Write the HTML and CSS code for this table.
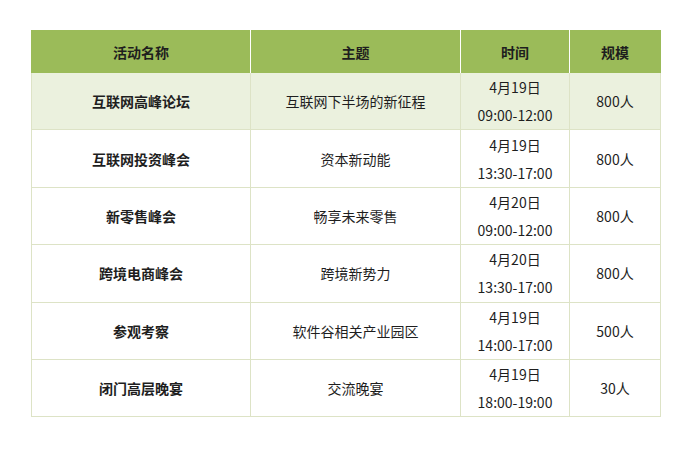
FILE: index.html
```html
<!DOCTYPE html>
<html lang="zh">
<head>
<meta charset="utf-8">
<link rel="stylesheet" href="styles.css">
</head>
<body>
<div class="page">
<table class="schedule">
  <colgroup>
    <col class="c1"><col class="c2"><col class="c3"><col class="c4">
  </colgroup>
  <thead>
    <tr><th>活动名称</th><th>主题</th><th>时间</th><th>规模</th></tr>
  </thead>
  <tbody>
    <tr class="hl"><td class="name">互联网高峰论坛</td><td>互联网下半场的新征程</td><td>4月19日<br>09:00-12:00</td><td>800人</td></tr>
    <tr><td class="name">互联网投资峰会</td><td>资本新动能</td><td>4月19日<br>13:30-17:00</td><td>800人</td></tr>
    <tr><td class="name">新零售峰会</td><td>畅享未来零售</td><td>4月20日<br>09:00-12:00</td><td>800人</td></tr>
    <tr><td class="name">跨境电商峰会</td><td>跨境新势力</td><td>4月20日<br>13:30-17:00</td><td>800人</td></tr>
    <tr><td class="name">参观考察</td><td>软件谷相关产业园区</td><td>4月19日<br>14:00-17:00</td><td>500人</td></tr>
    <tr><td class="name">闭门高层晚宴</td><td>交流晚宴</td><td>4月19日<br>18:00-19:00</td><td>30人</td></tr>
  </tbody>
</table>
</div>
</body>
</html>
```

FILE: styles.css
```css
html, body {
  margin: 0;
  padding: 0;
  background: #ffffff;
}
.page {
  padding: 30px 31px;
  font-family: "Noto Sans CJK SC", "Noto Sans", sans-serif;
  font-size: 14px;
  color: #1e1e1e;
}
.schedule {
  width: 629px;
  border-collapse: collapse;
  table-layout: fixed;
}
.c1 { width: 219px; }
.c2 { width: 210px; }
.c3 { width: 109px; }
.c4 { width: 91px; }
.schedule th {
  background: #9bbb59;
  height: 43px;
  padding: 0;
  font-weight: bold;
  text-align: center;
  vertical-align: middle;
  border-left: 1px solid #ffffff;
  border-right: 1px solid #ffffff;
  line-height: 20px;
}
.schedule th:first-child { border-left: 1px solid #9bbb59; }
.schedule th:last-child { border-right: 1px solid #9bbb59; }
.schedule td {
  height: 56.4px;
  padding: 0;
  text-align: center;
  vertical-align: middle;
  line-height: 28px;
  border: 1px solid #dde3c6;
}
.schedule tbody tr:first-child td { border-top: none; }
.schedule td.name { font-weight: bold; }
.schedule tr.hl td { background: #ebf1de; }
```
